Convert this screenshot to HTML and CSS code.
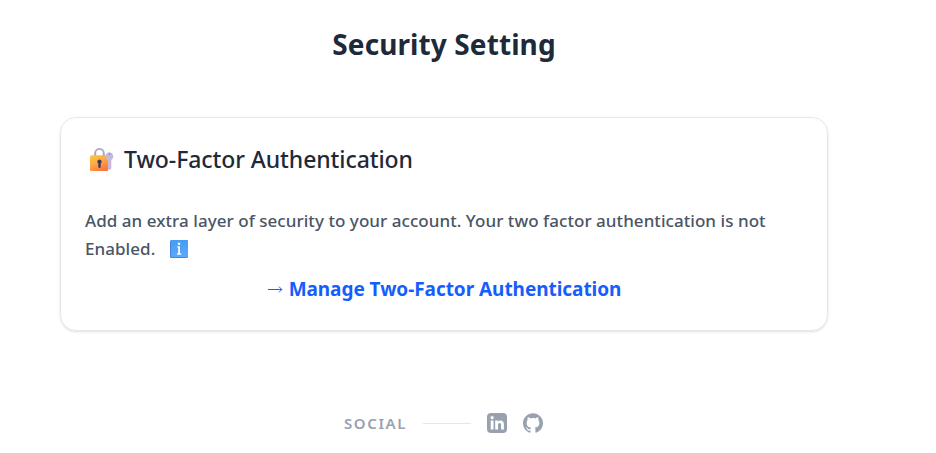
FILE: index.html
```
<!DOCTYPE html>
<html lang="en">
<head>
<meta charset="utf-8">
<title>Security Setting</title>
<link rel="stylesheet" href="styles.css">
</head>
<body>
<main class="page">
  <h1 class="title"><span>Security Setting</span></h1>
  <section class="card">
    <h2 class="card-title">
      <svg class="lock" viewBox="0 0 24 24" aria-hidden="true">
        <defs>
          <linearGradient id="gold" x1="0" y1="0" x2=".6" y2="1"><stop offset="0" stop-color="#ffc83d"/><stop offset=".5" stop-color="#fdab45"/><stop offset="1" stop-color="#f8783f"/></linearGradient>
          <linearGradient id="shackle" x1="0" y1="0" x2="0" y2="1"><stop offset="0" stop-color="#b9b3c2"/><stop offset="1" stop-color="#a59cae"/></linearGradient>
        </defs>
        <path d="M5.2 8V5.2a4.3 4.3 0 0 1 8.6 0V8" fill="none" stroke="url(#shackle)" stroke-width="2"/>
        <rect x="0" y="7.2" width="18.4" height="15.8" rx="1.6" fill="url(#gold)"/>
        <path d="M9.5 11.4a2.3 2.3 0 0 1 1.2 4.2v3.2a1.2 1.2 0 0 1-2.4 0v-3.2a2.3 2.3 0 0 1 1.2-4.2z" fill="#46365a"/>
        <path d="M19.2 4.3a4.1 4.1 0 0 1 2.1 7.6v8.5l-1.7 1.7-1.8-1.7V12a4.1 4.1 0 0 1 1.4-7.7z" fill="#c6b9d8"/>
        <circle cx="19.5" cy="6.3" r=".8" fill="#8f7da5"/>
      </svg>
      <span>Two-Factor Authentication</span>
    </h2>
    <p class="description">
      <span class="line">Add an extra layer of security to your account. Your two factor authentication is not</span>
      <span class="line line-last"><span>Enabled.</span>
        <svg class="info" viewBox="0 0 18 18" aria-label="Information">
          <defs><linearGradient id="blue" x1="0" y1="0" x2="0" y2="1"><stop offset="0" stop-color="#439df0"/><stop offset="1" stop-color="#5ca8ff"/></linearGradient></defs>
          <rect width="18" height="18" rx="1.5" fill="#3f87dc"/>
          <rect x="1" width="17" height="17" rx="1.3" fill="url(#blue)"/>
          <circle cx="9" cy="3.7" r="1.3" fill="#fff"/>
          <path d="M7.2 6.2H10v7.1h1.2v1.4H7v-1.4h1.1V7.6h-.9z" fill="#f4f8ff"/>
        </svg>
      </span>
    </p>
    <a class="manage" href="#">
      <svg class="arrow" viewBox="0 0 15 8" aria-hidden="true"><path d="M0 4.5h14M11 1.7l2.8 2.8L11 7.3"/></svg>
      <span>Manage Two-Factor Authentication</span>
    </a>
  </section>
  <footer class="social">
    <span class="social-label">SOCIAL</span>
    <span class="rule"></span>
    <a href="#" aria-label="LinkedIn"><svg class="brand" viewBox="0 0 20 20"><path fill-rule="evenodd" d="M4 0h12a4 4 0 0 1 4 4v12a4 4 0 0 1-4 4H4a4 4 0 0 1-4-4V4a4 4 0 0 1 4-4zM5.1 3.1a1.6 1.6 0 1 0 0 3.2 1.6 1.6 0 0 0 0-3.2zM3.7 7.6v8.8h2.8V7.6zM8.2 7.6v8.8H11v-4.5c0-1.2.5-2 1.6-2s1.5.8 1.5 2v4.5h2.8v-5c0-2.5-1.2-4-3.3-4-1.3 0-2.2.6-2.7 1.4V7.6z"/></svg></a>
    <a href="#" aria-label="GitHub"><svg class="brand" viewBox="0 0 24 24"><path d="M12 .297c-6.63 0-12 5.373-12 12 0 5.303 3.438 9.8 8.205 11.385.6.113.82-.258.82-.577 0-.285-.01-1.04-.015-2.04-3.338.724-4.042-1.61-4.042-1.61C4.422 18.07 3.633 17.7 3.633 17.7c-1.087-.744.084-.729.084-.729 1.205.084 1.838 1.236 1.838 1.236 1.07 1.835 2.809 1.305 3.495.998.108-.776.417-1.305.76-1.605-2.665-.3-5.466-1.332-5.466-5.93 0-1.31.465-2.38 1.235-3.22-.135-.303-.54-1.523.105-3.176 0 0 1.005-.322 3.3 1.23.96-.267 1.98-.399 3-.405 1.02.006 2.04.138 3 .405 2.28-1.552 3.285-1.23 3.285-1.23.645 1.653.24 2.873.12 3.176.765.84 1.23 1.91 1.23 3.22 0 4.61-2.805 5.625-5.475 5.92.42.36.81 1.096.81 2.22 0 1.606-.015 2.896-.015 3.286 0 .315.21.69.825.57C20.565 22.092 24 17.592 24 12.297c0-6.627-5.373-12-12-12"/></svg></a>
  </footer>
</main>
</body>
</html>
```
FILE: styles.css
```
* { box-sizing: border-box; }
body { margin: 0; background: #fff; font-family: "Noto Sans", "Open Sans", sans-serif; }
h1, h2, p { margin: 0; }
a { color: inherit; text-decoration: none; }
svg { display: block; flex: none; }
.page { width: 888px; padding: 26px 60px 0; }
.title { height: 36px; font-size: 28px; line-height: 36px; font-weight: 700; color: #1e2939; text-align: center; letter-spacing: 0.1px; }
.card { height: 214px; margin-top: 55px; padding: 25px 24px 0; border: 1px solid #e5e7eb; border-radius: 16px; box-shadow: 0 1px 3px rgb(0 0 0 / 10%), 0 1px 2px -1px rgb(0 0 0 / 10%); }
.card-title { display: flex; align-items: center; height: 32px; padding-left: 5px; gap: 10px; font-size: 23px; font-weight: 500; line-height: 32px; color: #1e2939; letter-spacing: -0.08px; white-space: nowrap; }
.lock { width: 24px; height: 24px; margin-top: 1px; }
.description { margin-top: 32px; color: #4a5565; font-size: 17px; font-weight: 500; line-height: 28px; letter-spacing: 0.05px; }
.line { display: flex; align-items: center; height: 28px; white-space: nowrap; }
.line-last { gap: 15px; }
.info { width: 18px; height: 18px; }
.manage { display: flex; justify-content: center; align-items: center; gap: 6px; height: 28px; margin-top: 12px; padding-left: 1px; color: #155dfc; font-size: 19px; font-weight: 700; line-height: 28px; letter-spacing: -0.05px; white-space: nowrap; }
.arrow { width: 15px; height: 8px; fill: none; stroke: #155dfc; stroke-width: 1; }
.social { display: flex; justify-content: center; align-items: center; height: 24px; margin-top: 80px; padding-right: 1px; gap: 16px; color: #99a1af; }
.social-label { font-size: 15px; font-weight: 600; line-height: 24px; letter-spacing: 1.6px; }
.rule { width: 48px; height: 1px; background: #e5e7eb; }
.brand { width: 20px; height: 20px; fill: #99a1af; }
```
